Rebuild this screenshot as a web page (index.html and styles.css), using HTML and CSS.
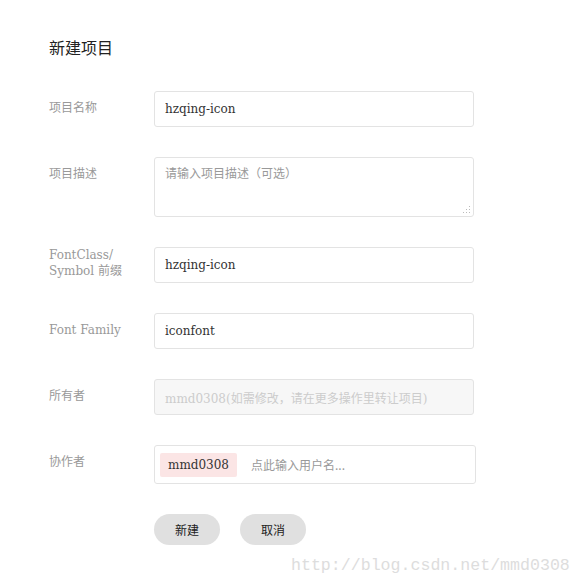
FILE: index.html
```html
<!DOCTYPE html>
<html lang="zh-CN">
<head>
    <meta charset="UTF-8">
    <title>新建项目</title>
    <link rel="stylesheet" href="styles.css">
</head>
<body>
<div class="page">
    <h2 class="title">新建项目</h2>
    <form class="form">
        <div class="row">
            <label class="label">项目名称</label>
            <input class="field" type="text" value="hzqing-icon">
        </div>
        <div class="row">
            <label class="label">项目描述</label>
            <textarea class="field area" placeholder="请输入项目描述（可选）"></textarea>
        </div>
        <div class="row">
            <label class="label two">FontClass/<br>Symbol 前缀</label>
            <input class="field" type="text" value="hzqing-icon">
        </div>
        <div class="row">
            <label class="label">Font Family</label>
            <input class="field" type="text" value="iconfont">
        </div>
        <div class="row">
            <label class="label">所有者</label>
            <input class="field" type="text" disabled value="mmd0308(如需修改，请在更多操作里转让项目)">
        </div>
        <div class="row">
            <label class="label">协作者</label>
            <div class="field users">
                <span class="tag">mmd0308</span>
                <input class="user-input" type="text" placeholder="点此输入用户名...">
            </div>
        </div>
        <div class="actions">
            <button type="button" class="btn">新建</button>
            <button type="button" class="btn">取消</button>
        </div>
    </form>
    <div class="mark">http://blog.csdn.net/mmd0308</div>
</div>
</body>
</html>
```

FILE: styles.css
```css
body {
    margin: 0;
    font-family: "DejaVu Serif", "Noto Sans CJK SC", serif;
    color: #333;
    background: #fff;
}
.page {
    padding: 35px 0 0 49px;
}
.title {
    margin: 0 0 32px;
    font-family: "Noto Sans CJK SC", sans-serif;
    font-size: 16px;
    font-weight: normal;
    line-height: 24px;
    color: #222;
}
.row {
    display: flex;
    align-items: flex-start;
    margin-bottom: 30px;
}
.label {
    width: 105px;
    flex: none;
    padding-top: 8px;
    font-size: 12px;
    line-height: 18px;
    color: #999;
}
.label.two {
    padding-top: 0;
    line-height: 16px;
}
.field {
    box-sizing: border-box;
    width: 320px;
    height: 36px;
    margin: 0;
    padding: 0 10px;
    border: 1px solid #e3e3e3;
    border-radius: 3px;
    font-family: "DejaVu Serif", "Noto Sans CJK SC", serif;
    font-size: 12px;
    color: #333;
    background: #fff;
    outline: none;
}
.field:disabled {
    background: #f7f7f7;
    color: #ccc;
    -webkit-text-fill-color: #ccc;
}
.area {
    height: 60px;
    padding: 6px 10px;
    resize: none;
    font-family: "Noto Sans CJK SC", sans-serif;
    font-size: 12px;
    /* dotted resize grip */
    background:
        linear-gradient(#bbb, #bbb) right 3px bottom 3px / 1px 1px no-repeat,
        linear-gradient(#bbb, #bbb) right 6px bottom 3px / 1px 1px no-repeat,
        linear-gradient(#bbb, #bbb) right 9px bottom 3px / 1px 1px no-repeat,
        linear-gradient(#bbb, #bbb) right 3px bottom 6px / 1px 1px no-repeat,
        linear-gradient(#bbb, #bbb) right 6px bottom 6px / 1px 1px no-repeat,
        linear-gradient(#bbb, #bbb) right 3px bottom 9px / 1px 1px no-repeat,
        #fff;
}
.area::placeholder {
    color: #999;
}
.users {
    display: flex;
    align-items: center;
    gap: 14px;
    width: 322px;
    height: 39px;
    padding: 0 5px;
}
.tag {
    padding: 0 8px;
    line-height: 24px;
    border-radius: 2px;
    background: #fbe5e5;
    font-size: 12px;
    color: #333;
}
.user-input {
    flex: 1;
    min-width: 0;
    border: none;
    outline: none;
    padding: 0;
    font-family: "Noto Sans CJK SC", sans-serif;
    font-size: 12px;
}
.user-input::placeholder {
    color: #999;
}
.actions {
    display: flex;
    gap: 20px;
    padding-left: 105px;
    margin-top: 1px;
}
.btn {
    width: 66px;
    height: 31px;
    border: none;
    border-radius: 16px;
    background: #e0e0e0;
    font-family: "Noto Sans CJK SC", sans-serif;
    font-size: 12px;
    color: #222;
}
.mark {
    margin: 11px 0 0 242px;
    font-family: "Liberation Mono", monospace;
    font-size: 16.6px;
    color: #ddd;
}
```
